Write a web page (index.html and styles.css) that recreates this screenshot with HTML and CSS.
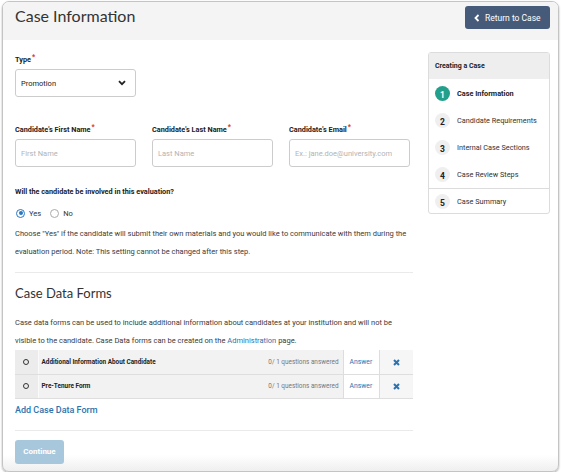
FILE: index.html
```html
<!DOCTYPE html>
<html lang="en">
<head>
  <meta charset="UTF-8">
  <title>Case Information</title>
  <link rel="stylesheet" href="styles.css">
</head>
<body>
  <div class="window">
    <header class="topbar">
      <h1>Case Information</h1>
      <a class="btn-return" href="#">
        <svg width="6" height="8" viewBox="0 0 6 8"><path d="M4.5 1 L1.5 4 L4.5 7" fill="none" stroke="#fff" stroke-width="1.8"/></svg>
        Return to Case
      </a>
    </header>

    <div class="layout">
      <main class="main">
        <div class="field">
          <label>Type<span class="req">*</span></label>
          <div class="select">
            <span>Promotion</span>
            <svg width="8" height="6" viewBox="0 0 8 6"><path d="M1 1.2 L4 4.2 L7 1.2" fill="none" stroke="#222" stroke-width="1.8"/></svg>
          </div>
        </div>

        <div class="row3">
          <div class="field">
            <label>Candidate's First Name<span class="req">*</span></label>
            <input type="text" placeholder="First Name">
          </div>
          <div class="field">
            <label>Candidate's Last Name<span class="req">*</span></label>
            <input type="text" placeholder="Last Name">
          </div>
          <div class="field">
            <label>Candidate's Email<span class="req">*</span></label>
            <input type="text" placeholder="Ex.: jane.doe@university.com">
          </div>
        </div>

        <p class="question">Will the candidate be involved in this evaluation?</p>
        <div class="radios">
          <span class="radio on"></span><span class="radio-label">Yes</span>
          <span class="radio"></span><span class="radio-label">No</span>
        </div>
        <p class="help">Choose "Yes" if the candidate will submit their own materials and you would like to communicate with them during the evaluation period. Note: This setting cannot be changed after this step.</p>

        <hr class="sep">

        <h2>Case Data Forms</h2>
        <p class="help para">Case data forms can be used to include additional information about candidates at your institution and will not be visible to the candidate. Case Data forms can be created on the <a href="#">Administration</a> page.</p>

        <table class="forms">
          <tr>
            <td class="c-radio"><span class="dot"></span></td>
            <td class="c-name"><b>Additional Information About Candidate</b><span class="count">0/ 1 questions answered</span></td>
            <td class="c-answer"><a href="#">Answer</a></td>
            <td class="c-del"><svg width="7" height="7" viewBox="0 0 7 7"><path d="M1 1 L6 6 M6 1 L1 6" stroke="#2b73b0" stroke-width="2"/></svg></td>
          </tr>
          <tr>
            <td class="c-radio"><span class="dot"></span></td>
            <td class="c-name"><b>Pre-Tenure Form</b><span class="count">0/ 1 questions answered</span></td>
            <td class="c-answer"><a href="#">Answer</a></td>
            <td class="c-del"><svg width="7" height="7" viewBox="0 0 7 7"><path d="M1 1 L6 6 M6 1 L1 6" stroke="#2b73b0" stroke-width="2"/></svg></td>
          </tr>
        </table>

        <a class="add-link" href="#">Add Case Data Form</a>

        <hr class="sep sep-low">

        <button class="btn-continue">Continue</button>
      </main>

      <aside class="steps">
        <div class="steps-head">Creating a Case</div>
        <ul class="step-list">
          <li class="step active"><span class="num">1</span>Case Information</li>
          <li class="step"><span class="num">2</span>Candidate Requirements</li>
          <li class="step"><span class="num">3</span>Internal Case Sections</li>
          <li class="step"><span class="num">4</span>Case Review Steps</li>
          <li class="step last"><span class="num">5</span>Case Summary</li>
        </ul>
      </aside>
    </div>
  </div>
</body>
</html>
```

FILE: styles.css
```css
* { box-sizing: border-box; }
body {
  margin: 0;
  background: #fff;
  font-family: Roboto, "Liberation Sans", Arial, sans-serif;
  color: #333;
}
.window {
  margin: 1px 0 0 2px;
  width: 557px;
  border: 1px solid #c4c4c4;
  border-radius: 7px;
  overflow: hidden;
  box-shadow: 0 1px 2px rgba(0,0,0,0.35);
  background: linear-gradient(to bottom, #fff calc(100% - 16px), #efefef);
}

/* top bar */
.topbar {
  height: 38px;
  background: #f4f4f4;
  display: flex; justify-content: space-between; align-items: flex-start;
  padding: 4px 8px 0 12px;
}
h1 {
  margin: 0;
  font-family: Lato, "Open Sans", sans-serif;
  font-size: 16px; font-weight: 400;
  line-height: 20px;
  color: #333;
}
.btn-return {
  display: flex; align-items: center; gap: 5px;
  height: 23px; width: 85px;
  padding-left: 9px;
  background: #465b7a;
  color: #fff;
  font-size: 8.5px;
  text-decoration: none;
  border-radius: 3px;
}

.layout { display: flex; align-items: flex-start; }
.main { flex: 1; padding: 14px 15px 7px 12px; }

/* form fields */
label {
  display: block;
  font-size: 7.3px; font-weight: bold;
  line-height: 12px;
  margin-bottom: 3px;
  color: #222;
}
.req { color: #e02b2b; font-size: 7px; vertical-align: top; line-height: 7px; margin-left: 1px; }
.select, input {
  width: 121px; height: 28px;
  border: 1px solid #ccc; border-radius: 3px;
  background: #fff;
  font-family: inherit;
  font-size: 7.5px;
}
.select {
  display: flex; justify-content: space-between; align-items: center;
  padding: 0 9px 0 5px;
  color: #222;
}
input { padding: 0 5px; outline: none; }
input::placeholder { color: #b3b3b3; }
.row3 {
  display: grid; grid-template-columns: repeat(3, 121px);
  column-gap: 16px;
  margin-top: 27px;
}

.question {
  margin: 19px 0 0;
  font-size: 7.3px; font-weight: bold;
  line-height: 12px; color: #222;
}
.radios {
  display: flex; align-items: center;
  height: 12px; margin-top: 9px;
  font-size: 7.5px;
}
.radio {
  width: 9px; height: 9px;
  border: 1px solid #aaa; border-radius: 50%;
  margin: 0 4px 0 1px;
  display: inline-flex; align-items: center; justify-content: center;
}
.radio.on { border-color: #2a78c0; }
.radio.on::after { content: ""; width: 4px; height: 4px; border-radius: 50%; background: #2a78c0; }
.radio-label { margin-right: 8px; }

.help {
  margin: 6px 0 0;
  font-size: 7.5px; line-height: 18px;
  color: #3a3a3a;
}
.help a { color: #2b73b0; text-decoration: none; }

.sep { border: 0; border-top: 1px solid #eaeaea; margin: 11px 0 0; }
.sep-low { margin-top: 14px; }

h2 {
  margin: 11px 0 0;
  font-family: Lato, "Open Sans", sans-serif;
  font-size: 13px; font-weight: 400;
  line-height: 18px; color: #333;
}
.para { margin-top: 12px; }

/* case data forms table */
.forms { width: 100%; border-collapse: collapse; }
.forms td {
  height: 24px; padding: 0;
  border-bottom: 1px solid #dedede;
  font-size: 6.4px;
}
.c-radio { width: 23px; background: #ececec; text-align: center; }
.dot {
  display: inline-block; width: 6px; height: 6px;
  border: 1px solid #333; border-radius: 50%;
  vertical-align: middle;
}
.c-name {
  background: #f2f2f2;
  border-left: 1px solid #fafafa;
  padding: 0 4px 0 3px !important;
}
.c-name b { font-weight: bold; color: #222; }
.count { float: right; color: #777; }
.c-answer {
  width: 36px; background: #fff;
  border-left: 1px solid #ddd; border-right: 1px solid #ddd;
  padding-left: 6px !important;
}
.c-answer a { color: #2b73b0; text-decoration: none; font-size: 6.8px; }
.c-del { width: 34px; background: #f6f6f6; text-align: center; }
.c-del svg { vertical-align: middle; }

.add-link {
  display: block; margin-top: 5px;
  font-size: 9px; font-weight: 500; line-height: 12px;
  color: #2b73b0; text-decoration: none;
}

.btn-continue {
  display: block; margin-top: 9px;
  width: 49px; height: 24px;
  border: none; border-radius: 3px;
  background: #a7c7dc; color: #fff;
  font-family: inherit; font-size: 8px; font-weight: bold;
}

/* sidebar steps */
.steps {
  width: 122px;
  margin: 12px 8px 0 0;
  border: 1px solid #dcdcdc; border-radius: 3px;
  overflow: hidden;
}
.steps-head {
  height: 26px; line-height: 26px;
  padding-left: 6px;
  background: #eeeeee;
  font-size: 7px; font-weight: bold; color: #222;
}
.step-list { list-style: none; margin: 0; padding: 1px 0 0; }
.step {
  display: flex; align-items: center;
  height: 27px; padding-left: 6px;
  font-size: 7.3px; color: #333;
}
.step.active { font-weight: bold; color: #222; }
.step.last { border-top: 1px solid #dcdcdc; height: 25px; }
.num {
  width: 15px; height: 15px; border-radius: 50%;
  background: #efefef;
  margin-right: 7px;
  display: flex; justify-content: center; align-items: flex-end;
  font-size: 8.5px; font-weight: bold; line-height: 11px; color: #222;
}
.active .num { background: #23a08c; color: #fff; }
```
